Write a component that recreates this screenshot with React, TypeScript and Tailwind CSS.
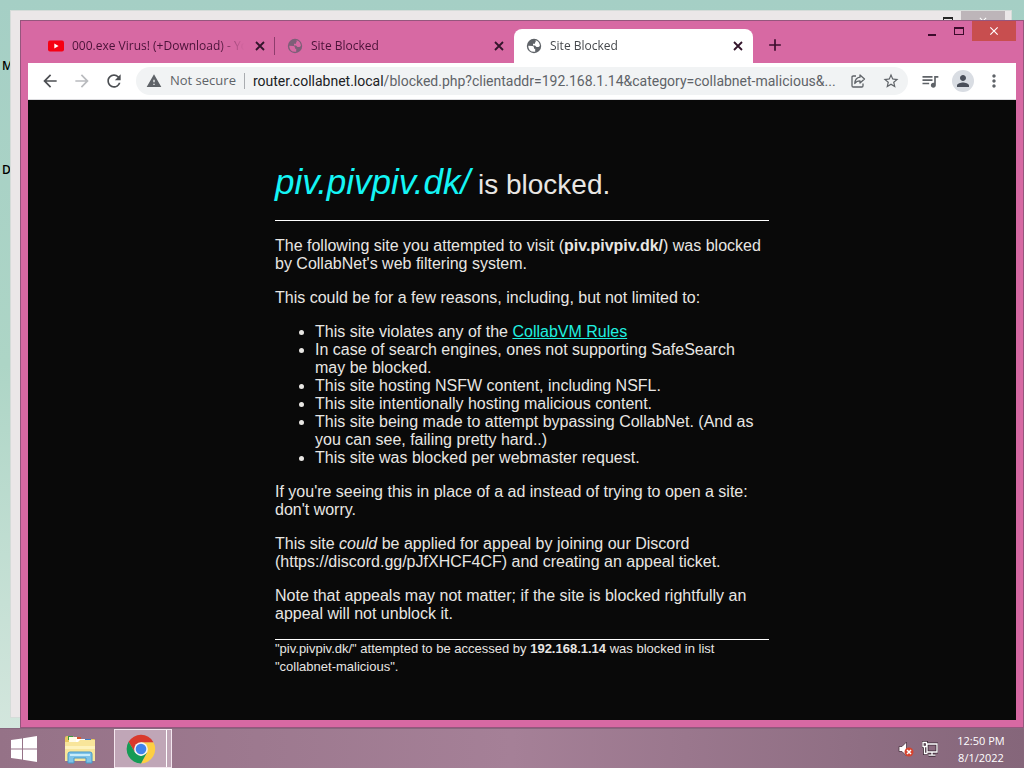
import type { ReactNode } from "react";
import { MdArrowBack, MdArrowForward, MdRefresh, MdWarning, MdStarBorder, MdQueueMusic, MdPerson, MdMoreVert, MdClose, MdAdd } from "react-icons/md";

type Tab = {
  title: string;
  icon: "youtube" | "globe";
  active?: boolean;
};

const tabs: Tab[] = [
  { title: "000.exe Virus! (+Download) - YouTube", icon: "youtube" },
  { title: "Site Blocked", icon: "globe" },
  { title: "Site Blocked", icon: "globe", active: true },
];

const reasons: ReactNode[] = [
  <>
    This site violates any of the{" "}
    <a href="#rules" className="text-[#20f0e0] underline">
      CollabVM Rules
    </a>
  </>,
  "In case of search engines, ones not supporting SafeSearch may be blocked.",
  "This site hosting NSFW content, including NSFL.",
  "This site intentionally hosting malicious content.",
  "This site being made to attempt bypassing CollabNet. (And as you can see, failing pretty hard..)",
  "This site was blocked per webmaster request.",
];

function YouTubeIcon() {
  return (
    <svg viewBox="0 0 16 16" className="size-4 shrink-0">
      <rect y="2.500" width="16" height="11" rx="2" fill="#f60012" />
      <path d="M6.300 5.500v5L10.600 8z" fill="#fff" />
    </svg>
  );
}

function GlobeIcon({ active }: { active?: boolean }) {
  const land = active ? "#fff" : "#d769a3";
  return (
    <svg viewBox="0 0 16 16" className={`size-4 shrink-0 ${active ? "text-[#5f6368]" : "text-[#7d5f78]"}`}>
      <circle cx="8" cy="8" r="7.200" fill="currentColor" />
      <path d="M2.200 7.800L6.500 8q1.500.2 1.500 1.800v1h1.200v3Q5.500 14.200 3.700 12.200 2.200 10.500 2.200 7.800z" fill={land} />
      <path d="M9.500 2.300Q13.700 3.500 13.900 8l-1.400 1H10.500L9 7.500H7V5.800h2V4.300h.8z" fill={land} />
    </svg>
  );
}

function CloseTabIcon() {
  return (
    <svg viewBox="0 0 14 14" className="size-[14px]" stroke="#33152b" strokeWidth="1.800">
      <path d="M3 3l8 8M11 3l-8 8" />
    </svg>
  );
}

function ShareIcon() {
  return (
    <svg viewBox="0 0 16 16" className="size-4" fill="none" stroke="#5f6368" strokeWidth="1.3" strokeLinejoin="round">
      <path d="M6 3H3.2Q2 3 2 4.200V12.800Q2 14 3.200 14H11.800Q13 14 13 12.800V10.500" />
      <path d="M10 2l4.500 4L10 10V7.800C7.500 7.800 6 8.600 4.800 10.500 5 7 6.800 4.600 10 4.200z" />
    </svg>
  );
}

function WindowsLogo() {
  return (
    <svg viewBox="0 0 28 26" className="h-[26px] w-7" fill="#fff">
      <path d="M1 4l11-1.600V12.400H1zM13 2.200L27 0v12.400H13zM1 13.600h11V23.600L1 22zM13 13.600h14V26l-14-2.200z" />
    </svg>
  );
}

function ExplorerIcon() {
  return (
    <svg viewBox="0 0 32 30" className="h-[30px] w-8">
      <path d="M1 4q0-2 2-2h6l2 3h19q1 0 1 1v20H1z" fill="#e9c860" />
      <path d="M4 2h5v4H4z" fill="#3f9a45" />
      <path d="M5 3h8v5H5z" fill="#fffbe6" />
      <path d="M13 3h4v3h-4z" fill="#d9542c" />
      <path d="M12 5h10v4H12z" fill="#fff" />
      <path d="M21 5h6v3h-6z" fill="#3b7fd0" />
      <path d="M1 8h13l2-2h15v21H1z" fill="#f8e59a" />
      <path d="M1 12h30v3H1z" fill="#fdf2bd" />
      <path d="M4 29V20q0-2 2-2h20q2 0 2 2v9h-6v-5H10v5z" fill="#7ec3e8" stroke="#4798c9" />
      <path d="M6 20h20v2H6z" fill="#c8ecfa" />
    </svg>
  );
}

function ChromeIcon() {
  return (
    <svg viewBox="0 0 48 48" className="size-[30px]">
      <path d="M24 13H43.900A23 23 0 0 1 24 47L33.500 29.500z" fill="#fdcf43" />
      <path d="M4.100 12.500A23 23 0 0 1 43.900 13H24L14.500 29.500z" fill="#d9392d" />
      <path d="M4.100 12.500L14.500 29.500 24 35 33.500 29.500 24 47A23 23 0 0 1 4.100 12.500z" fill="#159b55" />
      <circle cx="24" cy="24" r="11" fill="#f4f4f4" />
      <circle cx="24" cy="24" r="8.500" fill="#4183ec" />
    </svg>
  );
}

function VolumeMutedIcon() {
  return (
    <svg viewBox="0 0 16 16" className="size-4">
      <path d="M1 5.500h3L8.500 1v14L4 10.500H1z" fill="#fff" stroke="#4d3542" strokeWidth=".8" />
      <circle cx="11" cy="11" r="4.500" fill="#d5432f" />
      <path d="M9 9l4 4M13 9l-4 4" stroke="#fff" strokeWidth="1.500" />
    </svg>
  );
}

function NetworkIcon() {
  return (
    <svg viewBox="0 0 16 16" className="size-4" fill="none">
      <path d="M5 3h10v8H5zM10 11v3M6.500 14.200h7M2.500 6v6.500h3M1 1.500h3.500v4H1z" stroke="#3f2b38" strokeWidth="3" />
      <path d="M5 3h10v8H5zM10 11v3M6.500 14.200h7M2.500 6v6.500h3M1 1.500h3.500v4H1z" stroke="#fff" strokeWidth="1.300" />
    </svg>
  );
}

function BrowserTab({ title, icon, active }: Tab) {
  return (
    <div
      className={`flex h-[34px] w-[239px] min-w-0 items-center pr-[7px] pl-3 ${
        active ? "rounded-t-lg bg-white text-[#45484c]" : "text-[#4a1238]"
      }`}
    >
      <button className="flex min-w-0 flex-1 items-center gap-2 text-left">
        {icon === "youtube" ? <YouTubeIcon /> : <GlobeIcon active={active} />}
        <span className="min-w-0 flex-1 overflow-hidden mask-r-from-85% whitespace-nowrap">{title}</span>
      </button>
      <button aria-label="Close tab" className="ml-2 grid size-4 shrink-0 place-items-center">
        <CloseTabIcon />
      </button>
    </div>
  );
}

function TabStrip() {
  return (
    <div className="flex h-[42px] items-end pl-2 text-xs">
      <BrowserTab {...tabs[0]} />
      <div className="mb-2 -ml-px h-[18px] w-px shrink-0 bg-[#8d3d6c]" />
      <BrowserTab {...tabs[1]} />
      <BrowserTab {...tabs[2]} />
      <button aria-label="New tab" className="mb-2 ml-3 grid size-5 shrink-0 place-items-center text-[#3c0c2c]">
        <MdAdd className="size-5" />
      </button>
      <div className="ml-auto flex self-start">
        <button aria-label="Minimize" className="grid h-5 w-7 place-items-center">
          <span className="mt-2 h-0.5 w-2 bg-[#3c0c2c]" />
        </button>
        <button aria-label="Maximize" className="grid h-5 w-[26px] place-items-center">
          <span className="h-2 w-2.5 border border-t-2 border-[#3c0c2c]" />
        </button>
        <button aria-label="Close" className="grid h-5 w-11 place-items-center bg-[#c84e4f] text-white">
          <MdClose className="size-3.5" />
        </button>
      </div>
    </div>
  );
}

function Toolbar() {
  return (
    <div className="flex h-[37px] items-center border-b border-[#dcdcdf] bg-white px-3 text-[#5f6368]">
      <div className="flex gap-3">
        <button aria-label="Back" className="text-[#4c4f53]">
          <MdArrowBack className="size-5" />
        </button>
        <button aria-label="Forward" className="text-[#b9bbbe]">
          <MdArrowForward className="size-5" />
        </button>
        <button aria-label="Reload" className="text-[#4c4f53]">
          <MdRefresh className="size-5" />
        </button>
      </div>
      <div className="ml-3 flex h-7 min-w-0 flex-1 items-center rounded-full bg-[#f1f3f4] pr-2 pl-2.5 text-[13px]">
        <MdWarning className="size-4 shrink-0" />
        <span className="ml-2 shrink-0">Not secure</span>
        <span className="mx-2 h-4 w-px shrink-0 bg-[#a9acb0]" />
        <label htmlFor="address" className="shrink-0 font-['Roboto',sans-serif] text-sm text-[#202124]">
          router.collabnet.local
        </label>
        <input
          id="address"
          className="min-w-0 flex-1 bg-transparent font-['Roboto',sans-serif] text-sm outline-none"
          defaultValue="/blocked.php?clientaddr=192.168.1.14&category=collabnet-malicious&..."
        />
        <button aria-label="Share" className="mr-4 ml-2">
          <ShareIcon />
        </button>
        <button aria-label="Bookmark">
          <MdStarBorder className="size-[18px]" />
        </button>
      </div>
      <button aria-label="Media" className="ml-3">
        <MdQueueMusic className="size-5" />
      </button>
      <button aria-label="Profile" className="ml-3 grid size-[22px] place-items-center rounded-full bg-[#d9dde3]">
        <MdPerson className="size-[18px] text-[#4a4f5a]" />
      </button>
      <button aria-label="Menu" className="ml-2.5">
        <MdMoreVert className="size-5" />
      </button>
    </div>
  );
}

function BlockedPage() {
  return (
    <main className="flex-1 overflow-hidden bg-[#090909] pt-[62px] font-['Liberation_Sans',sans-serif] text-base leading-[18px] text-[#e8e6e3]">
      <div className="mx-auto w-1/2">
        <h1 className="text-[28px] leading-10">
          <em className="text-[35px] text-[#14f5f5]">piv.pivpiv.dk/</em> is blocked.
        </h1>
        <hr className="mt-[15px] mb-4 border-white" />
        <div className="space-y-4">
          <p>
            The following site you attempted to visit (<b>piv.pivpiv.dk/</b>) was blocked by CollabNet's web filtering system.
          </p>
          <p>This could be for a few reasons, including, but not limited to:</p>
          <ul className="list-disc pl-10">
            {reasons.map((reason, i) => (
              <li key={i}>{reason}</li>
            ))}
          </ul>
          <p>If you're seeing this in place of a ad instead of trying to open a site: don't worry.</p>
          <p>
            This site <em>could</em> be applied for appeal by joining our Discord (https://discord.gg/pJfXHCF4CF) and creating an
            appeal ticket.
          </p>
          <p>Note that appeals may not matter; if the site is blocked rightfully an appeal will not unblock it.</p>
        </div>
        <hr className="mt-4 border-white" />
        <p className="text-[13px]">
          "piv.pivpiv.dk/" attempted to be accessed by <b>192.168.1.14</b> was blocked in list "collabnet-malicious".
        </p>
      </div>
    </main>
  );
}

function Taskbar() {
  return (
    <footer className="flex h-10 shrink-0 items-center border-t border-[#87687e] bg-linear-to-r from-[#957287] via-[#a58097] to-[#85667a] text-white">
      <button aria-label="Start" className="grid w-12 place-items-center">
        <WindowsLogo />
      </button>
      <button aria-label="File Explorer" className="ml-2 grid w-12 place-items-center">
        <ExplorerIcon />
      </button>
      <button aria-label="Chrome" className="ml-2.5 flex h-full border border-[#f3e6ee] bg-[#c0a6b7]">
        <span className="grid h-full w-[52px] place-items-center border-r border-white">
          <ChromeIcon />
        </span>
        <span className="h-full w-1" />
      </button>
      <div className="ml-auto flex items-center gap-2">
        <VolumeMutedIcon />
        <NetworkIcon />
      </div>
      <div className="mx-4 w-[54px] text-center text-[11px] leading-[17px] whitespace-nowrap">
        <div>12:50 PM</div>
        <div>8/1/2022</div>
      </div>
    </footer>
  );
}

export default function App() {
  return (
    <div className="flex h-screen flex-col overflow-hidden bg-[#afd6c6] font-['Open_Sans',sans-serif]">
      <div className="relative flex-1 bg-linear-to-b from-[#a5cfc5] via-[#add5c6] to-[#d3e6dd]">
        <span className="absolute top-[58px] left-0.5 text-xs font-semibold text-black">M</span>
        <span className="absolute top-[162px] left-0.5 text-xs font-semibold text-black">D</span>
        <div className="absolute inset-y-2.5 right-3 left-2.5 border border-[#d5dcd9] bg-[#ebe7e8]">
          <div className="flex justify-end">
            <span className="mt-1.5 mr-2 h-2 w-2.5 border border-t-2 border-[#272727]" />
            <span className="mr-1.5 grid h-5 w-11 justify-center bg-[#bdb5b9] text-white">
              <MdClose className="mt-1 size-3" />
            </span>
          </div>
        </div>
        <div className="absolute top-5 right-0 bottom-0 left-5 flex flex-col border border-[#95567d] bg-[#d769a3] px-[7px] pb-[7px]">
          <TabStrip />
          <Toolbar />
          <BlockedPage />
        </div>
      </div>
      <Taskbar />
    </div>
  );
}
